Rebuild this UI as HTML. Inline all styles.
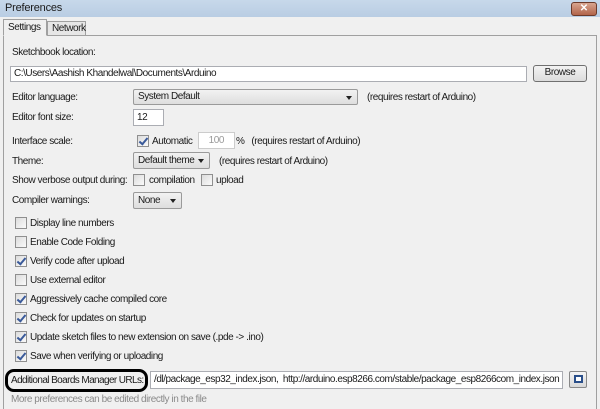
<!DOCTYPE html>
<html><head><style>
*{box-sizing:border-box;margin:0;padding:0}
body{width:600px;height:409px;overflow:hidden;background:#f0f0f0;font:10px "Liberation Sans",sans-serif;letter-spacing:-0.45px;color:#1a1a1a;position:relative}
.a{position:absolute;white-space:nowrap}
.title{left:0;top:0;width:600px;height:17px;background:linear-gradient(#c7d8ea,#b9cde3);}
.close{left:571px;top:2px;width:26px;height:14px;border-radius:3px;background:linear-gradient(#d8a58f,#b2644a);border:1px solid #6b3a2a;color:#fff;font-weight:bold;font-size:10px;text-align:center;line-height:12px;letter-spacing:0}
.panel{left:3px;top:35px;width:594px;height:374px;border:1px solid #a0a0a0;border-bottom:none;background:#f0f0f0}
.tab{border:1px solid #a0a0a0;border-bottom:none;background:#f0f0f0;padding:2px 4px 0}
.field{background:#fff;border:1px solid #abadb3;padding-left:3px;line-height:14px}
.dd{border:1px solid #9a9a9a;background:linear-gradient(#f2f2f2,#dedede);padding-left:4px;line-height:14px;border-radius:2px}
.dd:after{content:"";position:absolute;right:5px;top:6px;border:3px solid transparent;border-top:4px solid #222}
.cb{width:12px;height:12px;border:1px solid #8f8f8f;background:linear-gradient(135deg,#dcdcdc,#fafafa)}
.ck:after{content:"";position:absolute;left:3px;top:0px;width:3px;height:7px;border:solid #3a5a9a;border-width:0 2px 2px 0;transform:rotate(40deg)}
.btn{border:1px solid #707070;border-radius:3px;background:linear-gradient(#f3f3f3,#dcdcdc);text-align:center;line-height:14px}
</style></head><body>
<div class="a title"></div>
<div class="a" style="left:5px;top:2px;font-size:11px;letter-spacing:-0.2px">Preferences</div>
<div class="a close">✕</div>
<div class="a panel"></div>
<div class="a tab" style="left:3px;top:19px;height:17px;width:44px;background:#f0f0f0;z-index:2;border-bottom:1px solid #f0f0f0">Settings</div>
<div class="a tab" style="left:47px;top:21px;height:14px;width:39px;background:#e6e6e6;padding-top:1px">Network</div>

<div class="a" style="left:12px;top:47px">Sketchbook location:</div>
<div class="a field" style="left:10px;top:66px;width:517px;height:16px">C:\Users\Aashish Khandelwal\Documents\Arduino</div>
<div class="a btn" style="left:533px;top:65px;width:54px;height:17px">Browse</div>

<div class="a" style="left:12px;top:92px">Editor language:</div>
<div class="a dd" style="left:133px;top:89px;width:225px;height:16px">System Default</div>
<div class="a" style="left:367px;top:92px">(requires restart of Arduino)</div>

<div class="a" style="left:12px;top:112px">Editor font size:</div>
<div class="a field" style="left:133px;top:109px;width:31px;height:17px;line-height:15px">12</div>

<div class="a" style="left:12px;top:136px">Interface scale:</div>
<div class="a cb ck" style="left:137px;top:135px"></div>
<div class="a" style="left:152px;top:136px">Automatic</div>
<div class="a field" style="left:198px;top:132px;width:37px;height:17px;color:#999;text-align:right;padding-right:10px;line-height:15px;border-color:#ccc">100</div>
<div class="a" style="left:236px;top:136px">%&nbsp;&nbsp;&nbsp;(requires restart of Arduino)</div>

<div class="a" style="left:12px;top:156px">Theme:</div>
<div class="a dd" style="left:133px;top:152px;width:77px;height:17px;line-height:15px">Default theme</div>
<div class="a" style="left:219px;top:156px">(requires restart of Arduino)</div>

<div class="a" style="left:12px;top:175px">Show verbose output during:</div>
<div class="a cb" style="left:133px;top:174px"></div>
<div class="a" style="left:149px;top:175px">compilation</div>
<div class="a cb" style="left:201px;top:174px"></div>
<div class="a" style="left:216px;top:175px">upload</div>

<div class="a" style="left:12px;top:195px">Compiler warnings:</div>
<div class="a dd" style="left:133px;top:192px;width:49px;height:17px;line-height:15px">None</div>

<div class="a cb" style="left:15px;top:217px"></div><div class="a" style="left:30px;top:218px">Display line numbers</div>
<div class="a cb" style="left:15px;top:236px"></div><div class="a" style="left:30px;top:237px">Enable Code Folding</div>
<div class="a cb ck" style="left:15px;top:255px"></div><div class="a" style="left:30px;top:256px">Verify code after upload</div>
<div class="a cb" style="left:15px;top:274px"></div><div class="a" style="left:30px;top:275px">Use external editor</div>
<div class="a cb ck" style="left:15px;top:293px"></div><div class="a" style="left:30px;top:294px">Aggressively cache compiled core</div>
<div class="a cb ck" style="left:15px;top:312px"></div><div class="a" style="left:30px;top:313px">Check for updates on startup</div>
<div class="a cb ck" style="left:15px;top:331px"></div><div class="a" style="left:30px;top:332px">Update sketch files to new extension on save (.pde -&gt; .ino)</div>
<div class="a cb ck" style="left:15px;top:350px"></div><div class="a" style="left:30px;top:351px">Save when verifying or uploading</div>

<div class="a" style="left:5px;top:369px;width:143px;height:23px;border:3px solid #000;border-radius:9px"></div>
<div class="a" style="left:11px;top:375px;letter-spacing:-0.6px">Additional Boards Manager URLs:</div>
<div class="a field" style="left:150px;top:371px;width:413px;height:18px;line-height:16px;overflow:hidden">/dl/package_esp32_index.json,&nbsp; http://arduino.esp8266.com/stable/package_esp8266com_index.json</div>
<div class="a" style="left:569px;top:371px;width:18px;height:17px;border:1px solid #888;border-radius:2px;background:linear-gradient(#f5f5f5,#d8d8d8)"><div class="a" style="left:4px;top:3px;width:9px;height:8px;border:2px solid #2a4f8a;background:#fff"></div></div>
<div class="a" style="left:11px;top:394px;color:#8a8a8a">More preferences can be edited directly in the file</div>
</body></html>
